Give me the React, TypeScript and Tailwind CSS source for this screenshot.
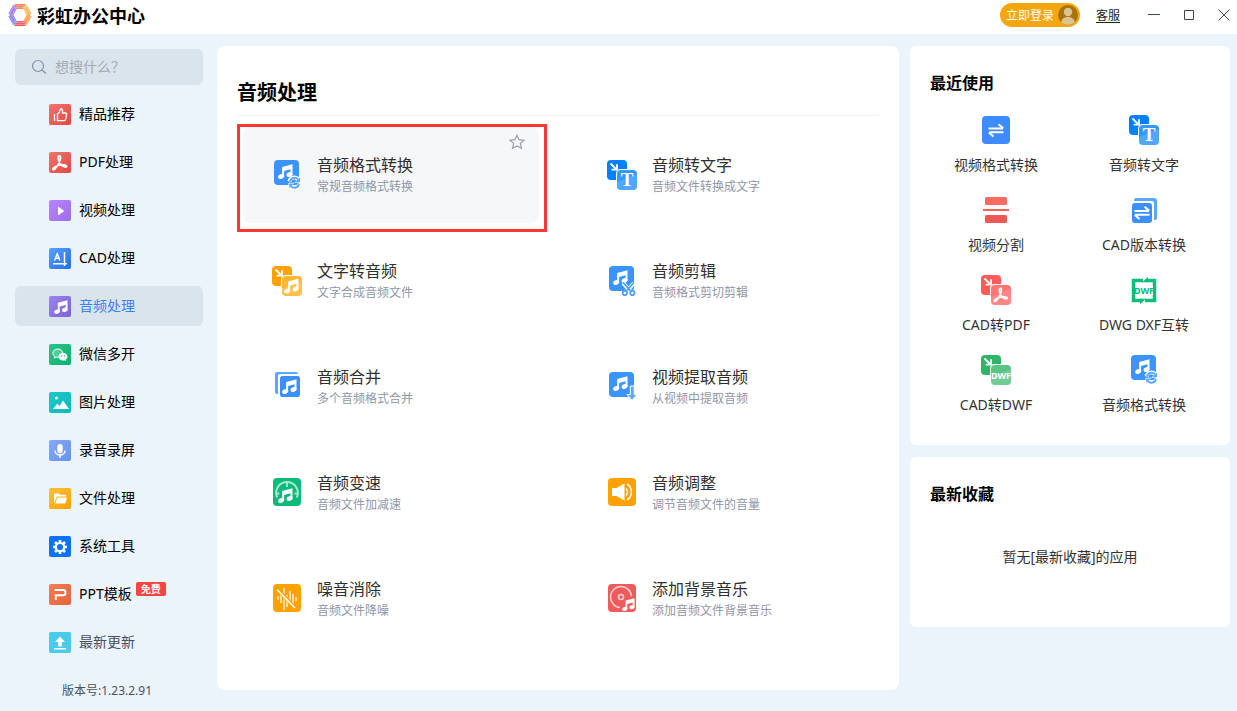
import { useState } from "react";
import type { ReactNode } from "react";

type Tool = {
  title: string;
  desc: string;
  icon: ReactNode;
};

function Notes({ x = 0, y = 0, size = 16, color = "#fff" }: { x?: number; y?: number; size?: number; color?: string }) {
  return (
    <svg x={x} y={y} width={size} height={size} viewBox="0.5 0.5 15 15" fill={color}>
      <path d="M4.600 3.500 15 .8v10.200h-2V5.800L6.600 7.400v5.800h-2z" />
      <ellipse cx="3.700" cy="13" rx="3.100" ry="2.300" transform="rotate(-18 3.700 13)" />
      <ellipse cx="12.100" cy="11" rx="3.100" ry="2.300" transform="rotate(-18 12.100 11)" />
    </svg>
  );
}

function Acrobat({ x = 0, y = 0, size = 18 }: { x?: number; y?: number; size?: number }) {
  return (
    <svg x={x} y={y} width={size} height={size} viewBox="0 0 24 24" fill="none" stroke="#fff" strokeWidth="2.300" strokeLinejoin="round">
      <path d="M11 2.500c2-.4 1.900 3 .9 6.300C10.600 13 7.600 17.800 5 20.300c-2 1.800-3.800-.3-1.300-2.200 3.200-2.300 9.300-4 13.500-3.700 4.200.3 4.500 3.100 2.200 3.100-3.800 0-8.700-5-9.700-10.800-.4-2.400-.2-3.900 1.300-4.200z" />
    </svg>
  );
}

function SvgBox({ children }: { children: ReactNode }) {
  return (
    <svg className="size-[30px] shrink-0" viewBox="0 0 30 30" aria-hidden="true">
      {children}
    </svg>
  );
}

// Two overlapping tiles: the source format behind, the result in front.
function ConvertIcon({ back, front, children }: { back: string; front: string; children: ReactNode }) {
  return (
    <SvgBox>
      <rect width="20" height="20" rx="4" fill={back} />
      <path d="M3.500 3.500 9 9M10 4.200V9.600H4.600" fill="none" stroke="#fff" strokeWidth="1.800" />
      <rect x="9" y="9" width="22" height="22" rx="4.500" fill="#fff" />
      <rect x="10" y="10" width="20" height="20" rx="4" fill={front} />
      <path d="M10 22 30 14v12a4 4 0 0 1-4 4H14a4 4 0 0 1-4-4z" fill="#fff" fillOpacity=".14" />
      {children}
    </SvgBox>
  );
}

function AudioTile({ children }: { children: ReactNode }) {
  return (
    <SvgBox>
      <rect x="2" width="25" height="25" rx="4" fill="#3b94fb" />
      <Notes x={6} y={4} size={15} />
      {children}
    </SvgBox>
  );
}

function AudioConvertIcon() {
  return (
    <AudioTile>
      <g fill="none" stroke="#fff" strokeWidth="4">
        <path d="M17.500 21.500a5 5 0 0 1 8.500-2.500M27.500 24a5 5 0 0 1-8.500 2.500" />
      </g>
      <path d="M28.500 16.500v6.300h-6.200zM16.500 29v-6.300h6.200z" fill="#fff" />
      <path d="M18 21.500a4.700 4.700 0 0 1 8-2.200M27 24a4.700 4.700 0 0 1-8 2.200" fill="none" stroke="#5aa8ff" strokeWidth="2" />
      <path d="M28 17.600v4.600h-4.600zM17.200 28v-4.600h4.600z" fill="#5aa8ff" />
    </AudioTile>
  );
}

function TextIcon() {
  return (
    <ConvertIcon back="#0080ff" front="#3499ff">
      <text x="20" y="26" textAnchor="middle" fill="#fff" className="font-['Liberation_Serif',serif] text-[19px] font-bold">
        T
      </text>
    </ConvertIcon>
  );
}

function SwapArrows({ x, y }: { x: number; y: number }) {
  return (
    <path
      transform={`translate(${x} ${y})`}
      d="M0 5h14.500M10 .8l4.800 4M15 8.700H.5M5 12.900.3 9"
      fill="none"
      stroke="#fff"
      strokeWidth="2"
    />
  );
}

const tools: Tool[] = [
  { title: "音频格式转换", desc: "常规音频格式转换", icon: <AudioConvertIcon /> },
  { title: "音频转文字", desc: "音频文件转换成文字", icon: <TextIcon /> },
  {
    title: "文字转音频",
    desc: "文字合成音频文件",
    icon: (
      <ConvertIcon back="#ffa200" front="#ffb632">
        <Notes x={12} y={12.500} size={15} />
      </ConvertIcon>
    ),
  },
  {
    title: "音频剪辑",
    desc: "音频格式剪切剪辑",
    icon: (
      <AudioTile>
        <g fill="none" stroke="#fff" strokeWidth="4">
          <path d="m16 17 8 9M27 17l-8 9" />
        </g>
        <g fill="none" stroke="#4da0f5" strokeWidth="1.800">
          <path d="m16 16.500 8.200 9M27 16.500l-8.200 9" />
          <circle cx="17.800" cy="27" r="2.200" fill="#fff" />
          <circle cx="25.400" cy="27" r="2.200" fill="#fff" />
        </g>
      </AudioTile>
    ),
  },
  {
    title: "音频合并",
    desc: "多个音频格式合并",
    icon: (
      <SvgBox>
        <path d="M3 20V2a2 2 0 0 1 2-2h19a2 2 0 0 1 2 2H8a2 2 0 0 0-2 2v18H5a2 2 0 0 1-2-2z" fill="#5ba6ff" />
        <rect x="8" y="4" width="20" height="21" rx="2.500" fill="#3b90fc" />
        <Notes x={10} y={7} size={15} />
      </SvgBox>
    ),
  },
  {
    title: "视频提取音频",
    desc: "从视频中提取音频",
    icon: (
      <AudioTile>
        <path d="M23.300 14h4v8.500h3L25 28.500l-5-6h3.300z" fill="#63abff" stroke="#fff" strokeWidth="1" />
      </AudioTile>
    ),
  },
  {
    title: "音频变速",
    desc: "音频文件加减速",
    icon: (
      <SvgBox>
        <rect x="1" width="28" height="28" rx="4" fill="#0bbb79" />
        <path d="M5.300 19.500a10.800 10.800 0 1 1 19.400 0M15 4.500V9M4 15.500h3.500M22.500 15.500H26" fill="none" stroke="#fff" strokeOpacity=".65" strokeWidth="2" />
        <Notes x={6} y={10} size={15} />
      </SvgBox>
    ),
  },
  {
    title: "音频调整",
    desc: "调节音频文件的音量",
    icon: (
      <SvgBox>
        <rect x="1" width="28" height="28" rx="4" fill="#ffa200" />
        <path d="M5 10h4.500L17.500 5.500v17L9.500 18H5z" fill="#fff" />
        <path d="M19 10.500c2 1.500 2 5.500 0 7M20 6c5.800 3.600 5.800 12.400 0 16" fill="none" stroke="#fff" strokeWidth="1.500" />
      </SvgBox>
    ),
  },
  {
    title: "噪音消除",
    desc: "音频文件降噪",
    icon: (
      <SvgBox>
        <rect x="1" width="28" height="28" rx="4" fill="#ffa200" />
        <path d="M6 12v4M9 9v10M12 4v22M15 11v12M18 7v14M21 10v10M24 13v4" stroke="#fff" strokeOpacity=".7" strokeWidth="1.800" />
        <path d="m6 5.500 17.500 19" stroke="#ffa200" strokeWidth="3.600" />
        <path d="M5 5.500 23 24" stroke="#fff" strokeWidth="1.700" />
      </SvgBox>
    ),
  },
  {
    title: "添加背景音乐",
    desc: "添加音频文件背景音乐",
    icon: (
      <SvgBox>
        <rect x="1" width="28" height="28" rx="4" fill="#ee5b5b" />
        <g fill="none" stroke="#fff" strokeOpacity=".7" strokeWidth="1.600">
          <path d="M13 23.500a10.500 10.500 0 1 1 11.500-11" />
          <circle cx="14" cy="13" r="2.500" />
        </g>
        <Notes x={15} y={14} size={13} />
      </SvgBox>
    ),
  },
];

const recent = [
  {
    label: "视频格式转换",
    icon: (
      <SvgBox>
        <rect x="1" y="1" width="28" height="28" rx="4" fill="#3d8bfd" />
        <SwapArrows x={7.500} y={8.500} />
      </SvgBox>
    ),
  },
  { label: "音频转文字", icon: <TextIcon /> },
  {
    label: "视频分割",
    icon: (
      <SvgBox>
        <rect x="4" y="2" width="22" height="8" rx="1.500" fill="#f96a61" />
        <rect x="2" y="14" width="26" height="2" fill="#f2605a" />
        <rect x="4" y="20" width="22" height="8" rx="1.500" fill="#ec5855" />
      </SvgBox>
    ),
  },
  {
    label: "CAD版本转换",
    icon: (
      <SvgBox>
        <path d="M5 6V5a2 2 0 0 1 2-2h18a3 3 0 0 1 3 3v17a2 2 0 0 1-2 2h-1V8a2 2 0 0 0-2-2z" fill="#5ba6ff" />
        <rect x="3" y="8" width="20" height="20" rx="3" fill="#3b90fc" />
        <SwapArrows x={5.500} y={11} />
      </SvgBox>
    ),
  },
  {
    label: "CAD转PDF",
    icon: (
      <ConvertIcon back="#ff5b5b" front="#ff7474">
        <Acrobat x={11.500} y={11.500} size={17} />
      </ConvertIcon>
    ),
  },
  {
    label: "DWG DXF互转",
    icon: (
      <SvgBox>
        <path d="M14 5.500H4.500v20h9M16 25.500h9.500v-20H17" fill="none" stroke="#0bbf7a" strokeWidth="3.500" />
        <path d="m13 7.200 6-5.200v5.200zM17 23.800l-6 5.200v-5.200z" fill="#0bbf7a" />
        <rect x="6" y="11" width="18" height="9" fill="#fff" />
        <text x="15" y="19" textAnchor="middle" fill="#0bb574" className="text-[9px] font-bold">
          DWF
        </text>
      </SvgBox>
    ),
  },
  {
    label: "CAD转DWF",
    icon: (
      <ConvertIcon back="#2fb566" front="#58c485">
        <text x="20" y="24" textAnchor="middle" fill="#fff" className="text-[9px] font-bold">
          DWF
        </text>
      </ConvertIcon>
    ),
  },
  { label: "音频格式转换", icon: <AudioConvertIcon /> },
];

const navItems = [
  {
    label: "精品推荐",
    tile: "bg-linear-to-br from-[#ee7470] to-[#e74440]",
    icon: <path d="M5.500 10v7M8.500 10c2-1 2.500-3 2.800-4.500.3-1.200 2.200-.9 2.200 1V9h3c1 0 1.300.8 1.100 1.700l-1 4.800c-.2.8-.7 1.200-1.500 1.200H8.500z" fill="none" stroke="#fff" strokeWidth="1.300" />,
  },
  {
    label: "PDF处理",
    tile: "bg-linear-to-br from-[#ee7470] to-[#e74440]",
    icon: <Acrobat x={2} y={2} size={18} />,
  },
  {
    label: "视频处理",
    tile: "bg-linear-to-br from-[#b885fa] to-[#9d6cec]",
    icon: <path d="M9 7.200v7.600c0 .4.400.5.700.300l5-3.700c.3-.2.300-.6 0-.8l-5-3.700c-.3-.2-.7-.1-.7.300z" fill="#fff" />,
  },
  {
    label: "CAD处理",
    tile: "bg-linear-to-br from-[#5b9dfb] to-[#1b70f0]",
    icon: <path d="m5.500 12.500 2.700-6.500 2.700 6.500M6.500 10.300h3.500M4 15.700h14M15.500 4v14" fill="none" stroke="#fff" strokeWidth="1.500" />,
  },
  {
    label: "音频处理",
    tile: "bg-linear-to-br from-[#9a85ec] to-[#7d62da]",
    icon: <Notes x={5} y={4} size={14} />,
  },
  {
    label: "微信多开",
    tile: "bg-linear-to-br from-[#29c589] to-[#05b26c]",
    icon: (
      <>
        <path d="M8.800 5c-2.900 0-5 1.900-5 4.200 0 1.400.7 2.500 1.900 3.300l-.4 1.600 1.900-1c.5.1 1 .2 1.600.2 2.800 0 5-1.900 5-4.100C13.800 6.900 11.600 5 8.800 5z" fill="#fff" fillOpacity=".25" stroke="#fff" strokeWidth="1" />
        <path d="M14 9c-2.500 0-4.400 1.600-4.400 3.700s1.900 3.700 4.400 3.700c.5 0 1-.1 1.500-.2l1.700.9-.4-1.500c1-.7 1.600-1.700 1.600-2.900C18.400 10.600 16.500 9 14 9z" fill="#fff" />
        <circle cx="12.500" cy="12" r=".7" fill="#16b877" />
        <circle cx="15.500" cy="12" r=".7" fill="#16b877" />
      </>
    ),
  },
  {
    label: "图片处理",
    tile: "bg-linear-to-br from-[#20c5c9] to-[#05bdb9]",
    icon: (
      <>
        <circle cx="7.500" cy="6" r="1.500" fill="#fff" />
        <path d="m4 17 4.300-5.500 2.200 2.500L14 8.500 20 17z" fill="#fff" />
      </>
    ),
  },
  {
    label: "录音录屏",
    tile: "bg-linear-to-br from-[#83a9fb] to-[#6892ec]",
    icon: (
      <>
        <rect x="8.300" y="4" width="5.400" height="9.500" rx="2.700" fill="#fff" />
        <path d="M6 10.500c0 6 10 6 10 0M11 15v3" fill="none" stroke="#fff" strokeWidth="1.400" />
      </>
    ),
  },
  {
    label: "文件处理",
    tile: "bg-linear-to-br from-[#ffc22f] to-[#ffa000]",
    icon: <path d="M5 15V6.500c0-.6.400-1 1-1h3.500l1.500 1.300h5c.6 0 1 .4 1 1v.7H7.800L5.700 14zm1.300.5 2.100-6h9.600l-1.500 5.300c-.1.400-.5.700-1 .7z" fill="#fff" />,
  },
  {
    label: "系统工具",
    tile: "bg-[#0b73fb]",
    icon: (
      <>
        <circle cx="11" cy="11" r="4.200" fill="none" stroke="#fff" strokeWidth="2.200" />
        <path d="M16 11h2M14.500 14.500 16 16M11 16v2M7.500 14.500 6 16M6 11H4M7.500 7.500 6 6M11 6V4M14.500 7.500 16 6" stroke="#fff" strokeWidth="2.600" />
      </>
    ),
  },
  {
    label: "PPT模板",
    tile: "bg-linear-to-br from-[#f27d57] to-[#e8613a]",
    icon: <path d="M5.500 6h9c2.700 0 2.700 5.200 0 5.200H6.800V16" fill="none" stroke="#fff" strokeWidth="2" />,
    badge: "免费",
  },
  {
    label: "最新更新",
    tile: "bg-[#4acbea]",
    icon: <path d="m11 4.500 5 5.500h-3.200v4.500H9.200V10H6zM5 16h12v1.400H5z" fill="#fff" />,
    muted: true,
  },
];

function Logo() {
  return (
    <svg className="size-6 shrink-0" viewBox="0 0 24 24" fill="none" strokeWidth="5" aria-hidden="true">
      <path d="M6.500 3.500h11" stroke="#f3815f" />
      <path d="m16.500 3 5 9" stroke="#fbb95a" />
      <path d="m21.500 12-5 9" stroke="#fca04c" />
      <path d="M17.500 20.500h-11" stroke="#ef5b62" />
      <path d="m7.500 21-5-9" stroke="#8a84ee" />
      <path d="m2.500 12 5-9" stroke="#a97be3" />
      <g stroke="#fff" strokeOpacity=".55" strokeWidth=".6">
        <path d="M6 2.700h12M6 4.700h12M6 19.300h12M6 21.300h12M17.500 2l5.500 10M15.500 4l4.500 8-4.500 8M23 12l-5.500 10M6.500 2 1 12l5.500 10M8.500 4 4 12l4.500 8" />
      </g>
    </svg>
  );
}

function TitleBar() {
  return (
    <header className="flex h-[34px] items-center bg-white pr-[7px] pl-2 pb-1">
      <Logo />
      <h1 className="mt-px ml-[5px] text-lg leading-6 font-bold text-black">彩虹办公中心</h1>
      <button className="ml-auto flex h-6 w-20 items-center justify-between rounded-full bg-[#f5a60c] pr-0.5 pl-1.5 text-xs leading-4 text-white">
        <span className="pt-0.5">立即登录</span>
        <svg className="size-5" viewBox="0 0 20 20" aria-hidden="true">
          <circle cx="10" cy="10" r="10" fill="#a8730d" />
          <circle cx="10" cy="7" r="4.200" fill="#dcc491" />
          <path d="M3.200 17.300c.4-7 13.200-7 13.600 0a10 10 0 0 1-13.600 0z" fill="#dcc491" />
        </svg>
      </button>
      <a href="#service" className="ml-4 pt-0.5 text-xs leading-4 text-[#222] underline underline-offset-2">
        客服
      </a>
      <div className="ml-7 flex gap-[23px] text-[#3f4560]">
        <button aria-label="最小化">
          <svg className="size-3" viewBox="0 0 12 12" stroke="currentColor">
            <path d="M0 5.500h12" />
          </svg>
        </button>
        <button aria-label="最大化">
          <svg className="size-3" viewBox="0 0 12 12" fill="none" stroke="currentColor">
            <path d="M1.500 1.500h9v9h-9z" />
          </svg>
        </button>
        <button aria-label="关闭">
          <svg className="size-3" viewBox="0 0 12 12" stroke="currentColor">
            <path d="m.5.5 11 11m0-11-11 11" />
          </svg>
        </button>
      </div>
    </header>
  );
}

function Sidebar({ active, onSelect }: { active: string; onSelect: (label: string) => void }) {
  return (
    <aside className="w-[217px] shrink-0 pt-[15px] pr-[14px] pl-[15px]">
      <label className="flex h-9 items-center gap-2 rounded-md bg-[#d9e4ec] px-4">
        <svg className="size-4 shrink-0" viewBox="0 0 16 16" fill="none" stroke="#8092ad" strokeWidth="1.200" aria-hidden="true">
          <circle cx="7" cy="7" r="5.500" />
          <path d="m11 11 4 3.500" />
        </svg>
        <input
          type="search"
          aria-label="搜索"
          placeholder="想搜什么？"
          className="w-full min-w-0 bg-transparent text-sm leading-5 text-black outline-none placeholder:text-[#a6a9ae]"
        />
      </label>

      <nav className="mt-[9px] flex flex-col gap-2">
        {navItems.map((item) => (
          <a
            key={item.label}
            href="#nav"
            onClick={() => onSelect(item.label)}
            className={`flex h-10 items-center rounded-md pl-[34px] text-sm leading-5 ${
              item.label === active ? "bg-[#d9e4ec] text-[#3b82f6]" : item.muted ? "text-[#44506a]" : "text-black"
            }`}
          >
            <span className={`mr-2 h-[21px] w-[22px] rounded-xs ${item.tile}`}>
              <svg className="h-[21px] w-[22px]" viewBox="0 0 22 21" aria-hidden="true">
                {item.icon}
              </svg>
            </span>
            {item.label}
            {item.badge && (
              <span className="mt-2 ml-1 self-start rounded-xs bg-[#f84343] px-[5px] text-[10px] leading-[14px] font-bold text-white">
                {item.badge}
              </span>
            )}
          </a>
        ))}
      </nav>

      <p className="mt-[22px] pl-[47px] text-xs leading-[14px] text-[#4b5262]">版本号:1.23.2.91</p>
    </aside>
  );
}

function ToolCard({ tool, selected }: { tool: Tool; selected: boolean }) {
  return (
    <article className={`relative h-24 rounded-lg ${selected ? "bg-[#f5f7f9]" : ""}`}>
      <a href="#tool" className="flex h-full items-center gap-[15px] pl-[30px]">
        {tool.icon}
        <div>
          <h3 className="text-base leading-6 text-[#303030]">{tool.title}</h3>
          <p className="text-xs leading-5 text-[#9096a5]">{tool.desc}</p>
        </div>
      </a>
      {selected && (
        <>
          <div className="pointer-events-none absolute -top-[3px] -right-2 -bottom-[9px] -left-[5px] border-3 border-[#fa3636]" />
          <button aria-label="收藏" className="absolute top-[7px] right-[14px]">
            <svg className="size-4" viewBox="0 0 16 16" fill="none" stroke="#98a0ad" strokeWidth="1.200">
              <path d="m8 1.200 2 4.500 5 .5-3.700 3.200 1.200 5L8 12l-4.500 2.400 1.200-5L1 6.200l5-.5z" />
            </svg>
          </button>
        </>
      )}
    </article>
  );
}

export default function App() {
  const [active, setActive] = useState("音频处理");

  return (
    <div className="min-h-screen bg-[#ebf3fb] font-['Noto_Sans','Noto_Sans_CJK_SC',sans-serif]">
      <TitleBar />
      <div className="flex items-start pr-[7px]">
        <Sidebar active={active} onSelect={setActive} />

        <main className="mt-3 min-w-0 flex-1 rounded-lg bg-white px-5 pt-[33px] pb-[43px]">
          <h2 className="border-b border-[#f0f1f3] pb-2 text-xl leading-7 font-bold text-black">音频处理</h2>
          <div className="mt-[11px] grid grid-cols-2 gap-x-[38px] gap-y-2.5 px-[5px]">
            {tools.map((tool, index) => (
              <ToolCard key={tool.title} tool={tool} selected={index === 0} />
            ))}
          </div>
        </main>

        <aside className="mt-3 ml-[11px] flex w-[320px] shrink-0 flex-col gap-3">
          <section className="rounded-md bg-white px-3 pt-[25px] pb-[30px]">
            <h2 className="pl-2 text-base leading-6 font-bold text-black">最近使用</h2>
            <div className="mt-5 grid grid-cols-2 gap-y-5">
              {recent.map((item) => (
                <a key={item.label} href="#recent" className="flex flex-col items-center gap-2.5 text-sm leading-5 text-[#333]">
                  {item.icon}
                  {item.label}
                </a>
              ))}
            </div>
          </section>
          <section className="rounded-md bg-white px-5 pt-[25px] pb-[60px]">
            <h2 className="text-base leading-6 font-bold text-black">最新收藏</h2>
            <p className="mt-[41px] text-center text-sm leading-5 text-[#333]">暂无[最新收藏]的应用</p>
          </section>
        </aside>
      </div>
    </div>
  );
}
